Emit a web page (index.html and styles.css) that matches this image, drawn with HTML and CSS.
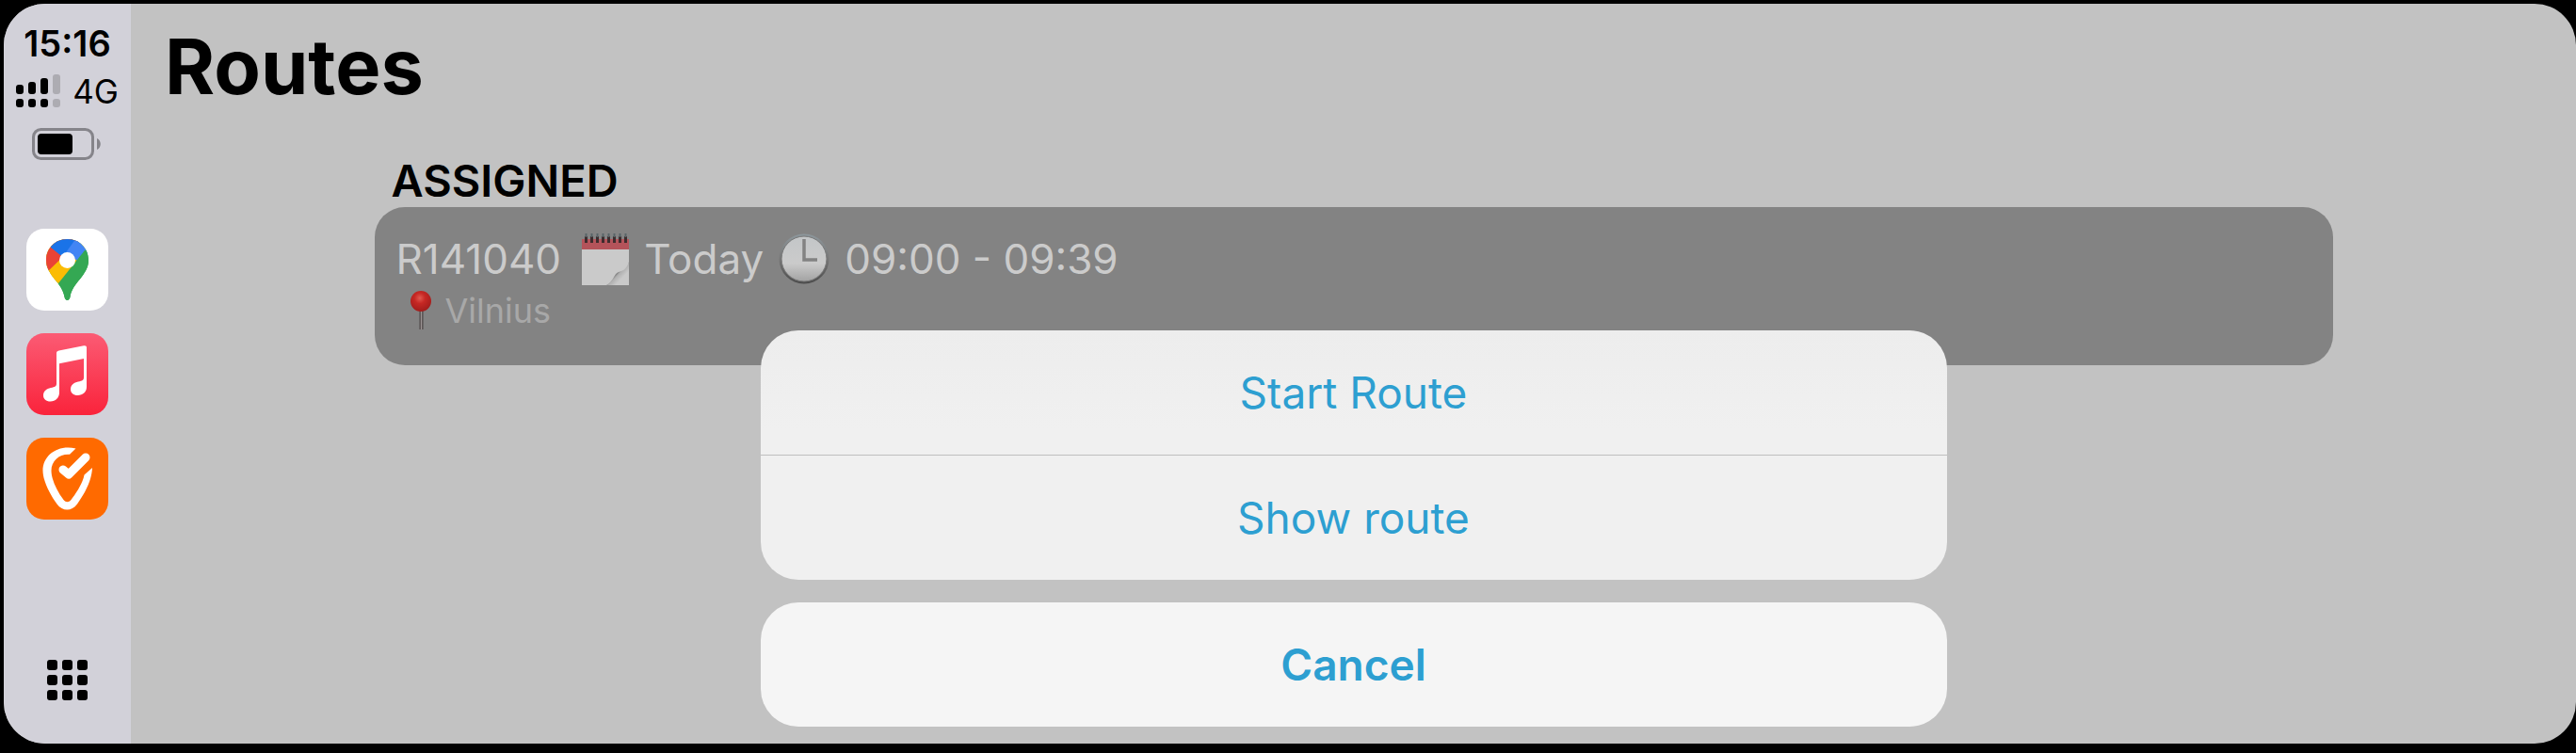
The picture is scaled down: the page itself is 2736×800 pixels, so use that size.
FILE: index.html
```html
<!DOCTYPE html>
<html lang="en">
<head>
    <meta charset="UTF-8">
    <meta name="viewport" content="width=device-width, initial-scale=1.0">
    <title>Routes</title>
    <link rel="stylesheet" href="styles.css">
</head>
<body>
    <div class="screen">
        <aside class="sidebar">
            <div class="status">
                <time class="clock">15:16</time>
                <div class="network">
                    <svg class="signal" viewBox="0 0 48 36" aria-hidden="true">
                        <rect x="0" y="11" width="8" height="10" rx="3"/>
                        <rect x="13" y="8" width="8" height="13" rx="3"/>
                        <rect x="26" y="4" width="8" height="17" rx="3"/>
                        <rect class="off" x="39" y="0" width="8" height="21" rx="3"/>
                        <rect x="0" y="26" width="8" height="9" rx="3"/>
                        <rect x="13" y="26" width="8" height="9" rx="3"/>
                        <rect x="26" y="26" width="8" height="9" rx="3"/>
                        <rect class="off" x="39" y="26" width="8" height="9" rx="3"/>
                    </svg>
                    <span>4G</span>
                </div>
                <svg class="battery" viewBox="0 0 74 34" aria-hidden="true">
                    <rect x="1.5" y="1.5" width="63" height="31" rx="8" fill="none" stroke="#85848a" stroke-width="3"/>
                    <rect x="6" y="6" width="37" height="22" rx="4"/>
                    <path d="M69 11c5 2 5 10 0 12z" fill="#85848a"/>
                </svg>
            </div>
            <nav class="apps">
                <a href="#" aria-label="Maps">
                    <svg viewBox="0 0 87 87">
                        <defs>
                            <clipPath id="pin">
                                <path d="M43.500 11c-12.500 0-22.500 9.500-22.500 22.500 0 16 17.500 24 19.500 39 .8 4.500 5.200 4.500 6 0 2-15 19.500-23 19.500-39C66 20.500 56 11 43.500 11z"/>
                            </clipPath>
                        </defs>
                        <rect width="87" height="87" rx="19" fill="#fff"/>
                        <g clip-path="url(#pin)">
                            <rect width="87" height="87" fill="#34a853"/>
                            <path d="M0 0h80L25 67 0 60z" fill="#fbbc04"/>
                            <path d="M0 0h70L21 47 0 60z" fill="#ea4335"/>
                            <path d="M26 20L43.500 34 66 8V0H20z" fill="#1a73e8"/>
                            <path d="M53 10L40 28l12 14 17-20z" fill="#4285f4"/>
                            <path d="M43 25L22 48l13 11 20-24z" fill="#fbbc04"/>
                            <path d="M62 23L34 58v20h40V20z" fill="#34a853"/>
                        </g>
                        <circle cx="43.500" cy="33.500" r="8.500" fill="#fff"/>
                    </svg>
                </a>
                <a href="#" aria-label="Music">
                    <svg viewBox="0 0 87 87">
                        <defs>
                            <linearGradient id="music" x1="0" y1="0" x2="0" y2="1">
                                <stop offset="0" stop-color="#fb5b74"/>
                                <stop offset="1" stop-color="#fa233b"/>
                            </linearGradient>
                        </defs>
                        <rect width="87" height="87" rx="19" fill="url(#music)"/>
                        <path d="M34.500 18.500L61 13.300c2-.4 3 .3 3 2V57c0 5.500-4 9-9.500 9-4.500 0-7.500-2.500-7.500-6.500 0-4.500 3.500-7 8-8 4.500-.9 6-1.500 6-4.500V27l-26 5.200V63c0 5.500-4 9.500-9.500 9.500-4.500 0-7.500-2.500-7.500-6.500 0-4.500 3.500-7 8-8 4.500-.9 6-1.500 6-4.500V21.500c0-1.800.7-2.600 2.500-3z" fill="#fff"/>
                    </svg>
                </a>
                <a href="#" aria-label="Route planner">
                    <svg viewBox="0 0 87 87">
                        <rect width="87" height="87" rx="19" fill="#ff6a00"/>
                        <path d="M52.500 11.500C33 7 17.500 19 17.500 35c0 11 8 26 15 35.500 6 8 15.500 8 21.500 0C61.500 60 69.500 46 70 32l-8.500 7.500C60 48 53 59 47.500 66c-2.500 3-5.500 3-8 0C32 56 26.500 44 26.500 35c0-10.500 8.500-18 19.500-17.300z" fill="#fff"/>
                        <path d="M39 34l6 5 18-18" fill="none" stroke="#fff" stroke-width="9" stroke-linecap="round" stroke-linejoin="round"/>
                    </svg>
                </a>
            </nav>
            <button class="dashboard" type="button" aria-label="Dashboard">
                <i></i><i></i><i></i>
                <i></i><i></i><i></i>
                <i></i><i></i><i></i>
            </button>
        </aside>

        <main class="content">
            <h1>Routes</h1>
            <section class="routes">
                <h2>ASSIGNED</h2>
                <article class="card">
                    <div class="route">
                        <span>R141040</span>
                        <svg class="emoji calendar" viewBox="0 0 50 56" aria-hidden="true">
                            <defs>
                                <linearGradient id="curl" x1="0.300" y1="0.300" x2="0.700" y2="0.700">
                                    <stop offset="0" stop-color="#c4c4c4"/>
                                    <stop offset="0.350" stop-color="#5c5c5c"/>
                                    <stop offset="0.600" stop-color="#b0b0b0"/>
                                    <stop offset="1" stop-color="#c9c9c9"/>
                                </linearGradient>
                            </defs>
                            <path d="M0 7h50v13H0z" fill="#b4535a"/>
                            <path d="M0 18h50v38H0z" fill="#cacaca"/>
                            <path d="M26 56c7-3 8-12 13-14 5-1 9-4 11-11v25z" fill="url(#curl)"/>
                            <path d="M4.500 4v7M10.500 4v7M16.500 4v7M22.500 4v7M28.500 4v7M34.500 4v7M40.500 4v7M46.500 4v7" stroke="#3e2c2e" stroke-width="3"/>
                            <path d="M4.500 1v4M10.500 1v4M16.500 1v4M22.500 1v4M28.500 1v4M34.500 1v4M40.500 1v4M46.500 1v4" stroke="#596568" stroke-width="2"/>
                        </svg>
                        <span>Today</span>
                        <svg class="emoji watch" viewBox="0 0 54 56" aria-hidden="true">
                            <defs>
                                <linearGradient id="rim" x1="0" y1="0" x2="0" y2="1">
                                    <stop offset="0" stop-color="#8d979c"/>
                                    <stop offset="0.500" stop-color="#777"/>
                                    <stop offset="1" stop-color="#4b4b4b"/>
                                </linearGradient>
                                <linearGradient id="face" x1="0" y1="0" x2="0" y2="1">
                                    <stop offset="0" stop-color="#c3c6c8"/>
                                    <stop offset="0.600" stop-color="#cbcbcb"/>
                                    <stop offset="1" stop-color="#a2a2a2"/>
                                </linearGradient>
                            </defs>
                            <circle cx="27" cy="28" r="26.500" fill="url(#rim)"/>
                            <circle cx="27" cy="28" r="24" fill="url(#face)" stroke="#777" stroke-width="1"/>
                            <path d="M27 7v22h14" fill="none" stroke="#828282" stroke-width="3.500"/>
                        </svg>
                        <span>09:00 - 09:39</span>
                    </div>
                    <div class="place">
                        <svg class="pushpin" viewBox="0 0 22 42" aria-hidden="true">
                            <defs>
                                <radialGradient id="ball" cx="0.450" cy="0.350" r="0.650">
                                    <stop offset="0" stop-color="#e0594f"/>
                                    <stop offset="0.400" stop-color="#c62824"/>
                                    <stop offset="1" stop-color="#a11c1b"/>
                                </radialGradient>
                            </defs>
                            <path d="M9.500 20h4v21h-4z" fill="#4b4444"/>
                            <path d="M11.500 20v21" stroke="#9c9494" stroke-width="1.500"/>
                            <circle cx="11" cy="11" r="11" fill="url(#ball)"/>
                        </svg>
                        <span>Vilnius</span>
                    </div>
                </article>
            </section>

            <div class="sheet" role="dialog" aria-label="Route actions">
                <div class="actions">
                    <button type="button">Start Route</button>
                    <button type="button">Show route</button>
                </div>
                <button class="cancel" type="button">Cancel</button>
            </div>
        </main>
    </div>
</body>
</html>
```

FILE: styles.css
```css
* {
    box-sizing: border-box;
}
body {
    margin: 0;
    padding: 4px 0 10px 4px;
    height: 100vh;
    background-color: #000;
    color: #000;
    font-family: Inter, "Liberation Sans", sans-serif;
}
h1, h2 {
    margin: 0;
}
button {
    border: 0;
    padding: 0;
    background: none;
    font-family: inherit;
    cursor: pointer;
}
svg {
    display: block;
}
.screen {
    display: flex;
    height: 100%;
    border-radius: 44px;
    overflow: hidden;
    background-color: #c2c2c2;
}

/* sidebar */
.sidebar {
    display: flex;
    flex-direction: column;
    align-items: center;
    width: 135px;
    padding: 20px 0 46px;
    background-color: #d2d1d9;
}
.status {
    display: flex;
    flex-direction: column;
    align-items: center;
    line-height: 44px;
}
.clock {
    font-size: 38px;
    font-weight: 600;
}
.network {
    display: flex;
    align-items: center;
    gap: 12px;
    height: 58px;
    font-size: 35px;
}
.signal {
    width: 48px;
    height: 36px;
}
.signal .off {
    fill: #adacb2;
}
.battery {
    width: 74px;
    height: 34px;
    margin-top: 10px;
}
.apps {
    display: flex;
    flex-direction: column;
    gap: 24px;
    margin-top: 73px;
}
.apps svg {
    width: 87px;
    height: 87px;
}
.dashboard {
    display: grid;
    grid-template-columns: repeat(3, 11px);
    gap: 5px;
    margin-top: auto;
}
.dashboard i {
    height: 11px;
    border-radius: 3px;
    background-color: #000;
}

/* route list */
.content {
    position: relative;
    flex: 1;
    padding-top: 17px;
}
h1 {
    padding-left: 36px;
    font-size: 81px;
    line-height: 100px;
    font-weight: 700;
}
.routes {
    max-width: 2080px;
    margin: 42px auto 0;
}
h2 {
    padding-left: 18px;
    font-size: 47px;
    line-height: 57px;
    font-weight: 600;
}
.card {
    height: 168px;
    padding: 26px 23px;
    border-radius: 32px;
    background-color: #838383;
}
.route, .place {
    display: flex;
    align-items: center;
}
.route {
    gap: 16px;
    color: #cbcbcb;
    font-size: 44px;
    line-height: 58px;
}
.emoji {
    height: 56px;
}
.calendar {
    width: 50px;
    margin-left: 6px;
}
.watch {
    width: 54px;
}
.place {
    gap: 15px;
    padding-left: 15px;
    color: #a8a8a8;
    font-size: 36px;
    line-height: 52px;
}
.pushpin {
    width: 22px;
    height: 42px;
}

/* action sheet */
.sheet {
    position: absolute;
    left: 0;
    right: 0;
    bottom: 18px;
    display: flex;
    flex-direction: column;
    gap: 24px;
    max-width: 1260px;
    margin: 0 auto;
}
.actions {
    border-radius: 40px;
    overflow: hidden;
    background: linear-gradient(#ededed, #f0f0f0 40%);
}
.sheet button {
    display: block;
    width: 100%;
    height: 132px;
    color: #2d9fd1;
    font-size: 46px;
}
.actions button + button {
    height: 133px;
    border-top: 1px solid #bfbfbf;
}
.sheet .cancel {
    border-radius: 40px;
    background-color: #f5f5f5;
    font-weight: 600;
}
```
